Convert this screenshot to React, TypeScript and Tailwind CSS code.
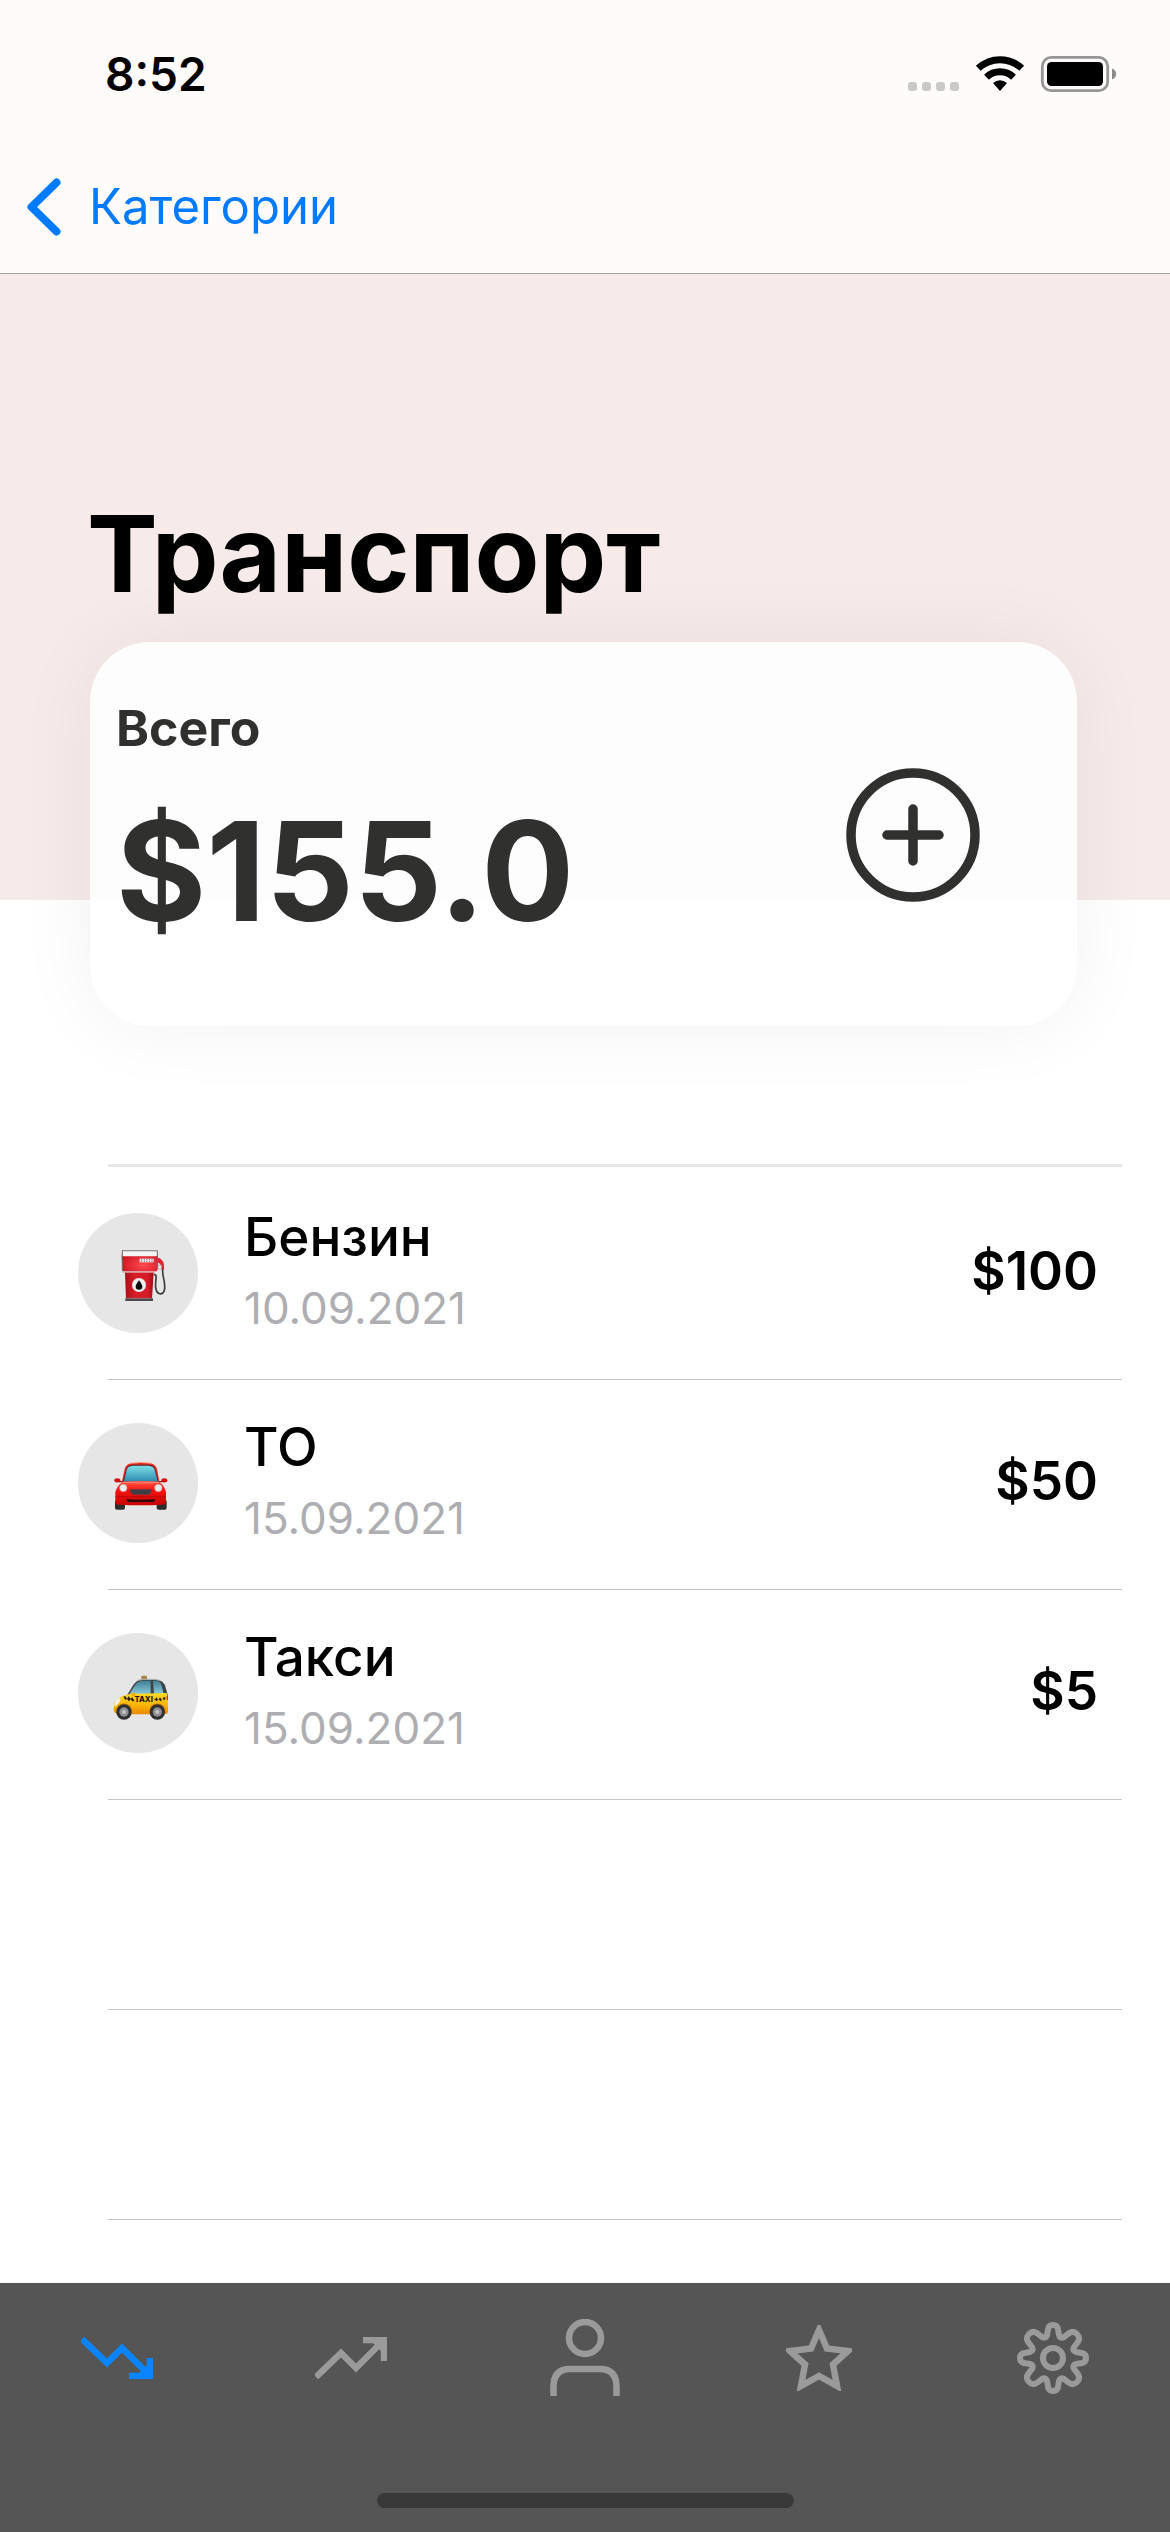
import React from "react";

function StatusIcons() {
  return (
    <svg className="h-[40px] w-[210px]" viewBox="906 53 210 40" aria-hidden="true">
      <g fill="#cbc9c8">
        <rect x="907" y="82" width="9" height="9" rx="3" />
        <rect x="921" y="82" width="9" height="9" rx="3" />
        <rect x="935" y="82" width="9" height="9" rx="3" />
        <rect x="949" y="82" width="9" height="9" rx="3" />
      </g>
      <path d="M992 83Q999 77.500 1006 83L999 91Z" />
      <g fill="none" stroke="#000" strokeWidth="7">
        <path d="M985.500 77.200A19.500 19.500 0 0 1 1012.500 77.200" />
        <path d="M977.300 68.300A31.500 31.500 0 0 1 1020.700 68.300" />
      </g>
      <rect x="1041.300" y="57.300" width="65.400" height="33.400" rx="9" fill="none" stroke="#979696" strokeWidth="2.800" />
      <rect x="1046" y="62" width="56" height="24" rx="4.500" />
      <path d="M1111 68.500C1116.500 70.500 1116.500 77.500 1111 79.500Z" fill="#8b8a8a" />
    </svg>
  );
}

function FuelPump() {
  return (
    <svg viewBox="0 0 120 120" className="size-full" aria-hidden="true">
      <defs>
        <radialGradient id="pumpTop" cx=".6" cy=".7" r=".7">
          <stop offset="0" stopColor="#ff4a50" />
          <stop offset="1" stopColor="#cc0f1c" />
        </radialGradient>
        <linearGradient id="pumpBase">
          <stop offset="0" stopColor="#a90d17" />
          <stop offset=".35" stopColor="#d81e29" />
          <stop offset=".8" stopColor="#d51c27" />
          <stop offset="1" stopColor="#9c0c14" />
        </linearGradient>
      </defs>
      <g transform="translate(30 27) scale(.3333)">
        <path d="M138 104C152 102 138 128 144 148C149 167 168 166 170 146C172 122 162 110 164 86" fill="none" stroke="#3b3b3d" strokeWidth="5" />
        <path d="M148 57Q152 51 159 58L166 66Q170 82 167 90L160 88L157 72L148 67Z" fill="#dc2430" />
        <path d="M151 75L161 76V87L149 86Z" fill="#eee" stroke="#777" strokeWidth="1.500" />
        <path d="M42 32H148L150 50L147 94H44L41 50Z" fill="url(#pumpTop)" />
        <path d="M41 31H149V49H41Z" fill="#f4f4f4" />
        <path d="M42 31H148V34H42Z" fill="#77787a" />
        <path d="M43 32V92M148 32V88" stroke="#6c6063" strokeWidth="3" />
        <rect x="95" y="56" width="42" height="11" fill="#f4eeee" />
        <path d="M101 57V66M109 57V66M117 57V66M125 57V66M132 57V66" stroke="#827c7c" strokeWidth="3" strokeDasharray="4 1" />
        <path d="M51 97H137L132 176H54Z" fill="url(#pumpBase)" />
        <path d="M45 96H140" stroke="#d99a9d" strokeWidth="4" />
        <path d="M52 175H135V183H52Z" fill="#4b4b4d" />
        <path d="M56 175H131" stroke="#9a8a8b" strokeWidth="2" />
        <circle cx="93" cy="135" r="21" fill="#f1eeee" />
        <path d="M93 121Q103 134 103 140A10 9 0 0 1 83 140Q83 134 93 121Z" fill="#0c0c0c" />
      </g>
    </svg>
  );
}

function RedCar() {
  return (
    <svg viewBox="0 0 120 120" className="size-full" aria-hidden="true">
      <defs>
        <linearGradient id="carBody" x2="0" y2="1">
          <stop offset="0" stopColor="#ff5a47" />
          <stop offset=".4" stopColor="#f51110" />
          <stop offset="1" stopColor="#c50504" />
        </linearGradient>
        <linearGradient id="carGlass" x2="0" y2="1">
          <stop offset="0" stopColor="#7be0e6" />
          <stop offset="1" stopColor="#2a86ad" />
        </linearGradient>
      </defs>
      <g transform="translate(30 32) scale(.3333)">
        <rect x="21" y="134" width="30" height="30" rx="6" fill="#2d2d2d" />
        <rect x="146" y="134" width="30" height="30" rx="6" fill="#2d2d2d" />
        <path d="M42 79L50 42Q55 25 74 24H122Q142 25 147 42L154 79Z" fill="#e5281f" />
        <path d="M66 25Q98 20 132 25" fill="none" stroke="#ff927c" strokeWidth="3" />
        <ellipse cx="28" cy="76" rx="9" ry="6.500" fill="#d60f10" />
        <ellipse cx="169" cy="76" rx="9" ry="6.500" fill="#d60f10" />
        <path d="M33 80L45 80M152 80L164 80" stroke="#a60b0b" strokeWidth="4" />
        <path d="M45 80L54 44Q58 30 74 29H122Q139 30 142 44L152 80Z" fill="#54212a" />
        <path d="M48 79L56 45Q59 33 74 32H122Q137 33 140 45L149 79Q98 84 48 79Z" fill="url(#carGlass)" />
        <path d="M44 80Q98 76 153 80Q171 92 174 112V140Q174 148 164 149Q98 153 32 149Q22 148 22 140V112Q26 92 44 80Z" fill="url(#carBody)" />
        <path d="M45 82Q98 86 152 82" fill="none" stroke="#ff8a77" strokeWidth="3" />
        <path d="M22 125H174" stroke="#a80908" strokeWidth="2" />
        <path d="M66 103H131L129 112L122 119H75L68 112Z" fill="#3c4046" stroke="#8c3538" strokeWidth="2" />
        <path d="M55 132Q98 135 143 132L138 141H60Z" fill="#32080a" />
        <circle cx="46" cy="99" r="11" fill="#ececec" stroke="#c79a98" strokeWidth="2" />
        <circle cx="151" cy="99" r="11" fill="#ececec" stroke="#c79a98" strokeWidth="2" />
      </g>
    </svg>
  );
}

function TaxiCab() {
  return (
    <svg viewBox="0 0 120 120" className="size-full" aria-hidden="true">
      <defs>
        <linearGradient id="taxiBody" x2="0" y2="1">
          <stop offset="0" stopColor="#ffdc24" />
          <stop offset=".55" stopColor="#fcb408" />
          <stop offset="1" stopColor="#e88904" />
        </linearGradient>
        <linearGradient id="taxiGlass" x2="0" y2="1">
          <stop offset="0" stopColor="#3f7f92" />
          <stop offset="1" stopColor="#8bcbdc" />
        </linearGradient>
      </defs>
      <g transform="translate(30 34) scale(.3333)">
        <rect x="100" y="26" width="17" height="12" rx="3" fill="#a98448" />
        <path d="M56 86L76 54Q86 38 104 38H140Q164 38 171 55L180 86Z" fill="#3d4448" />
        <path d="M88 40Q108 35 140 37L158 41" fill="none" stroke="#a9adaf" strokeWidth="3" />
        <path d="M64 82L80 56Q88 42 104 41H128V80Z" fill="url(#taxiGlass)" />
        <path d="M135 41H145Q156 42 160 53L167 80H138Z" fill="url(#taxiGlass)" />
        <path d="M18 112Q24 94 46 86Q60 80 80 80L176 78Q182 92 180 112V136Q178 142 168 142H34Q18 140 17 130Z" fill="url(#taxiBody)" />
        <path d="M19 115Q22 96 37 92Q40 105 21 119Z" fill="#f3f0e7" />
        <path d="M69 77H82V87L71 86Z" fill="#f6a90c" />
        <g fill="#2b2104">
          <path d="M46 88H52L57 95L62 88L68 95L73 91L80 103H73L68 97L63 103L57 96L52 99Z" />
          <path d="M134 91L140 99L145 91L151 99L156 91L162 99L167 91L173 91L170 100L164 96L158 103L152 97L146 103L139 96Z" />
        </g>
        <text x="107" y="104" textAnchor="middle" fontFamily="Inter, sans-serif" fontWeight="800" fontSize="23" fill="#1f1802">TAXI</text>
        <path d="M176 86H180V99H176Z" fill="#d92b20" />
        <path d="M24 140Q23 109 48 109T73 140ZM124 140Q123 109 148 109T173 140Z" fill="#d98a06" />
        <circle cx="48" cy="135" r="23" fill="#2f2f31" />
        <circle cx="48" cy="135" r="14" fill="#8d8f92" />
        <circle cx="48" cy="135" r="6" fill="#c3c5c7" />
        <circle cx="148" cy="135" r="23" fill="#2f2f31" />
        <circle cx="148" cy="135" r="14" fill="#8d8f92" />
        <circle cx="148" cy="135" r="6" fill="#c3c5c7" />
      </g>
    </svg>
  );
}

const expenses = [
  { name: "Бензин", date: "10.09.2021", amount: "$100", icon: <FuelPump /> },
  { name: "ТО", date: "15.09.2021", amount: "$50", icon: <RedCar /> },
  { name: "Такси", date: "15.09.2021", amount: "$5", icon: <TaxiCab /> },
];

const tabs = [
  {
    label: "Расходы",
    active: true,
    icon: (
      <svg className="h-[42px] w-[72px]" viewBox="0 0 72 42" fill="none" stroke="currentColor" strokeWidth="6.500">
        <path d="M1 2L26 26L41 11L68 38" />
        <path d="M69 21V39H48" />
        <path d="M55 39L69 25V39Z" fill="currentColor" stroke="none" />
      </svg>
    ),
  },
  {
    label: "Доходы",
    active: false,
    icon: (
      <svg className="h-[42px] w-[72px]" viewBox="0 0 72 42" fill="none" stroke="currentColor" strokeWidth="6.500">
        <path d="M1 40L26 16L41 31L68 4" />
        <path d="M69 24V3H48" />
        <path d="M55 3L69 17V3Z" fill="currentColor" stroke="none" />
      </svg>
    ),
  },
  {
    label: "Профиль",
    active: false,
    icon: (
      <svg className="h-[78px] w-[72px]" viewBox="0 0 72 78" fill="none" stroke="currentColor" strokeWidth="6.500">
        <circle cx="36" cy="19" r="16" />
        <path d="M4.500 77V68Q4.500 50 21 50H51Q67.500 50 67.500 68V77" />
      </svg>
    ),
  },
  {
    label: "Избранное",
    active: false,
    icon: (
      <svg className="size-[66px]" viewBox="0 0 66 66" fill="none" stroke="currentColor" strokeWidth="6.500">
        <path d="M33 5L41 23.500L62 26L47 39.500L51 61L33 51L15 61L19 39.500L4 26L25 23.500Z" />
      </svg>
    ),
  },
  {
    label: "Настройки",
    active: false,
    icon: (
      <svg className="size-[72px]" viewBox="0 0 72 72" fill="none" stroke="currentColor" strokeWidth="6" strokeLinejoin="round">
        <circle cx="36" cy="36" r="10" />
        <path d="M36 3C42 3 41 9 42 13Q43 17 47 15C51 12 55 7 60 12C65 17 60 21 57 25Q55 29 59 30C63 31 69 30 69 36C69 42 63 41 59 42Q55 43 57 47C60 51 65 55 60 60C55 65 51 60 47 57Q43 55 42 59C41 63 42 69 36 69C30 69 31 63 30 59Q29 55 25 57C21 60 17 65 12 60C7 55 12 51 15 47Q17 43 13 42C9 41 3 42 3 36C3 30 9 31 13 30Q17 29 15 25C12 21 7 17 12 12C17 7 21 12 25 15Q29 17 30 13C31 9 30 3 36 3Z" />
      </svg>
    ),
  },
];

export default function App() {
  return (
    <div className="flex min-h-screen flex-col bg-white font-[Inter,'Liberation_Sans',sans-serif] text-black">
      <header className="border-b border-[#a9a3a2] bg-[#fffbfa]">
        <div className="flex h-[141px] items-start justify-between pt-[46px] pr-[53px] pl-[105px]">
          <time className="text-[46px] leading-[56px] font-semibold">8:52</time>
          <div className="pt-[7px]">
            <StatusIcons />
          </div>
        </div>
        <nav className="flex h-[132px] items-center pl-[27px]">
          <a href="#categories" className="flex items-center gap-7 text-[49px] leading-[60px] text-[#007aff]">
            <svg className="h-[64px] w-[34px]" viewBox="0 0 34 64" fill="none" stroke="currentColor" strokeWidth="8" strokeLinecap="round" strokeLinejoin="round" aria-hidden="true">
              <path d="M29.500 7.500L4.500 32L29.500 56.500" />
            </svg>
            Категории
          </a>
        </nav>
      </header>

      <main className="flex-1">
        <div className="bg-[#f7ebe9] pt-[216px] pb-[282px] pl-[87px]">
          <h1 className="text-[106px] leading-[128px] font-bold">Транспорт</h1>
        </div>

        <section className="relative mr-[93px] ml-[90px] -mt-[258px] flex items-center justify-between rounded-[60px] bg-white/90 pt-[56px] pr-[97px] pb-[75px] pl-[26px] text-[#30302f] shadow-[0_0_80px_rgba(0,0,0,0.06)]">
          <div>
            <h2 className="text-[50px] leading-[60px] font-bold">Всего</h2>
            <p className="mt-[33px] text-[138px] leading-[160px] font-bold">$155.0</p>
          </div>
          <button type="button" aria-label="Добавить" className="mt-[21px] size-[134px]">
            <svg viewBox="0 0 134 134" fill="none" stroke="currentColor" strokeWidth="9.500" strokeLinecap="round" aria-hidden="true">
              <circle cx="67" cy="67" r="62" />
              <path d="M67 41V93M41 67H93" />
            </svg>
          </button>
        </section>

        <ul className="mt-[138px] mr-[48px] ml-[78px]">
          <li aria-hidden="true" className="mb-[3px] ml-[30px] h-[3px] bg-[#e5e5ea]" />
          {expenses.map((item) => (
            <li key={item.name}>
              <div className="flex h-[209px] items-center pr-6 pb-1">
                <div className="size-[120px] rounded-full bg-[#e6e6e6]">{item.icon}</div>
                <div className="ml-[46px] flex-1 pb-1">
                  <h3 className="text-[53px] leading-[62px] font-medium">{item.name}</h3>
                  <p className="mt-[13px] text-[44px] leading-[54px] text-[#aeaeb2]">{item.date}</p>
                </div>
                <span className="pb-1 text-[53px] leading-[64px] font-semibold">{item.amount}</span>
              </div>
              <div className="ml-[30px] h-px bg-[#c6c6c8]" />
            </li>
          ))}
          <li aria-hidden="true" className="ml-[30px] h-[210px] border-b border-[#c6c6c8]" />
          <li aria-hidden="true" className="ml-[30px] h-[210px] border-b border-[#c6c6c8]" />
        </ul>
      </main>

      <footer className="flex h-[249px] flex-col items-center justify-between bg-[#555] pb-6">
        <nav className="grid w-full grid-cols-5">
          {tabs.map((tab) => (
            <button
              key={tab.label}
              type="button"
              aria-label={tab.label}
              className={
                tab.active
                  ? "flex h-[150px] items-center justify-center text-[#0a84ff]"
                  : "flex h-[150px] items-center justify-center text-[#9a9a9a]"
              }
            >
              {tab.icon}
            </button>
          ))}
        </nav>
        <div className="h-[15px] w-[417px] rounded-full bg-[#393939]" />
      </footer>
    </div>
  );
}
